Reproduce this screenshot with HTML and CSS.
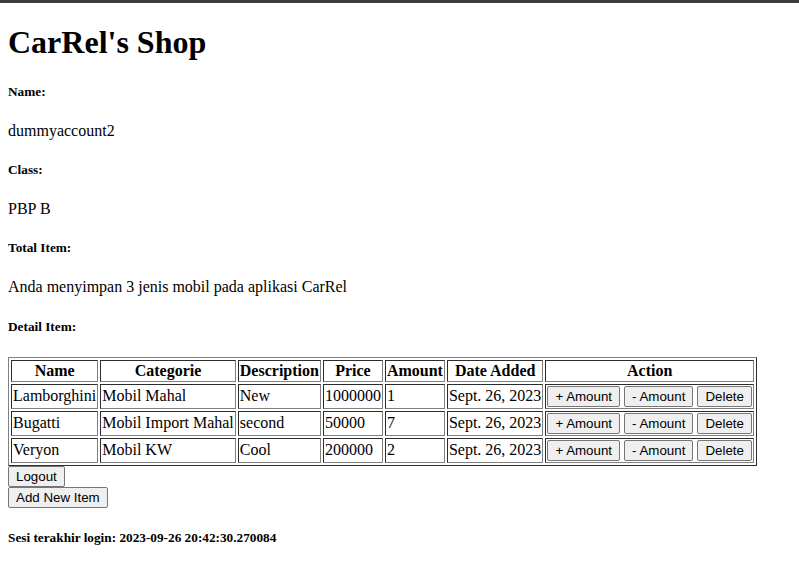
FILE: index.html
```html
<!DOCTYPE html>
<html>
<head>
<meta charset="utf-8">
<title>CarRel's Shop</title>
<link rel="stylesheet" href="styles.css">
</head>
<body>
<h1>CarRel's Shop</h1>
<h5>Name:</h5>
<p>dummyaccount2</p>
<h5>Class:</h5>
<p>PBP B</p>
<h5>Total Item:</h5>
<p>Anda menyimpan 3 jenis mobil pada aplikasi CarRel</p>
<h5>Detail Item:</h5>
<table class="items" border="1">
<tr><th>Name</th><th>Categorie</th><th>Description</th><th>Price</th><th>Amount</th><th>Date Added</th><th>Action</th></tr>
<tr><td>Lamborghini</td><td>Mobil Mahal</td><td>New</td><td>1000000</td><td>1</td><td>Sept. 26, 2023</td><td><button class="btn">+ Amount</button> <button class="btn">- Amount</button> <button class="btn">Delete</button></td></tr>
<tr><td>Bugatti</td><td>Mobil Import Mahal</td><td>second</td><td>50000</td><td>7</td><td>Sept. 26, 2023</td><td><button class="btn">+ Amount</button> <button class="btn">- Amount</button> <button class="btn">Delete</button></td></tr>
<tr><td>Veryon</td><td>Mobil KW</td><td>Cool</td><td>200000</td><td>2</td><td>Sept. 26, 2023</td><td><button class="btn">+ Amount</button> <button class="btn">- Amount</button> <button class="btn">Delete</button></td></tr>
</table>
<button class="btn">Logout</button><br>
<button class="btn">Add New Item</button>
<h5>Sesi terakhir login: 2023-09-26 20:42:30.270084</h5>
</body>
</html>
```
FILE: styles.css
```css
html {
  border-top: 3px solid #3c3c3c;
}
body {
  margin-top: 0;
  font-family: "Liberation Serif", serif;
  color: #000;
  background: #fff;
}
.items {
  border-color: grey;
}
.btn {
  font-family: "Liberation Sans", Arial, sans-serif;
  font-size: 13.333px;
  line-height: 17px;
  color: #000;
  background: #efefef;
  border: 1px solid #767676;
  border-radius: 2px;
  padding: 1px 7px;
  vertical-align: middle;
}
```
